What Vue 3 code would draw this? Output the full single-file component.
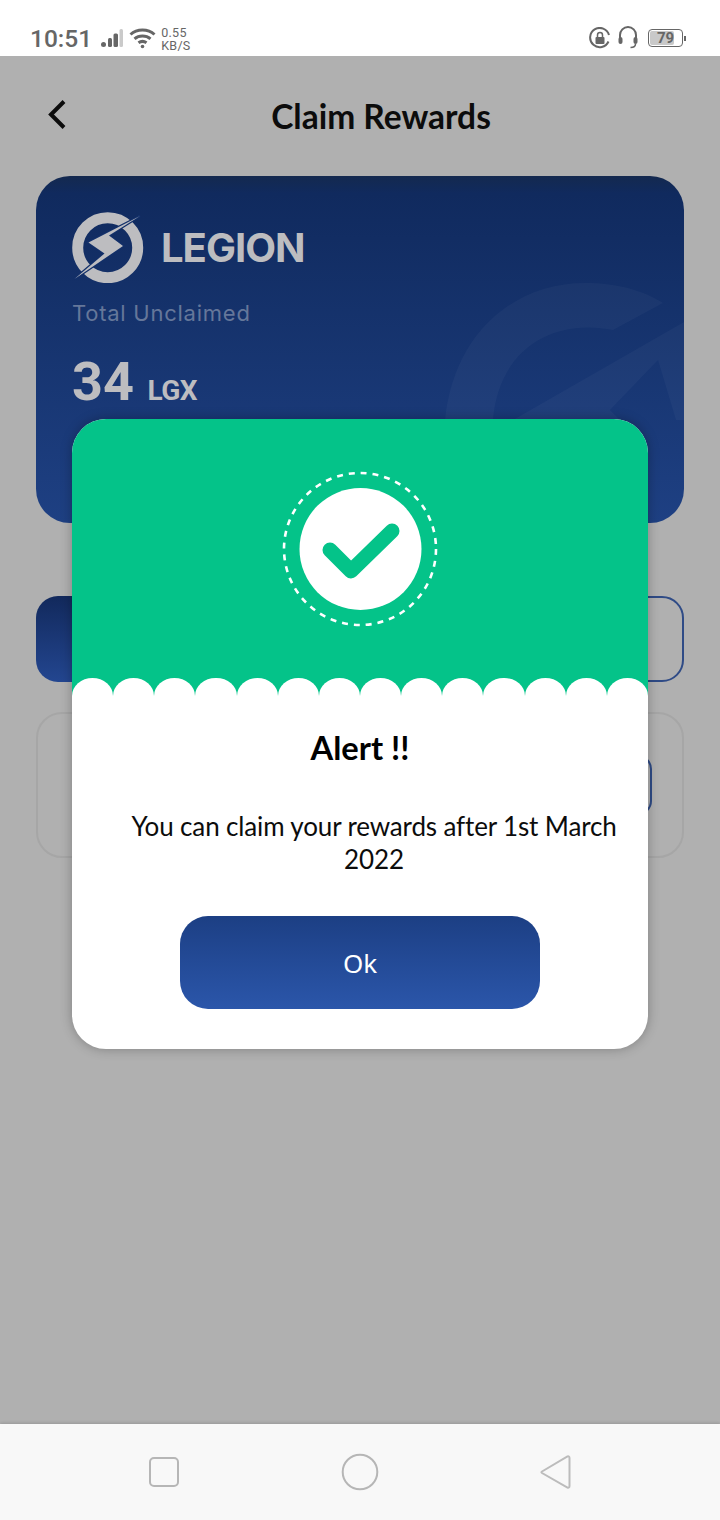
<template>
  <div class="screen">
    <div class="status">
      <div class="status-left">
        <span class="time">10:51</span>
        <svg class="signal" width="23" height="22" viewBox="0 0 23 22">
          <circle cx="2.500" cy="17.500" r="2.500" fill="#666" />
          <rect x="7" y="11" width="4" height="9" rx="1.500" fill="#666" />
          <rect x="12.500" y="6.500" width="4.500" height="13.500" rx="1.500" fill="#666" />
          <rect x="18.500" y="2" width="3.500" height="18" rx="1.500" fill="#cacaca" />
        </svg>
        <svg class="wifi" width="27" height="22" viewBox="0 0 27 22" fill="none" stroke="#666" stroke-width="3">
          <path d="M1.500 7.500C8 1.500 19 1.500 25.500 7.500" />
          <path d="M5.500 11.800C10 8 17 8 21.500 11.800" />
          <path d="M9.500 15.800C12 14 15 14 17.500 15.800" />
          <circle cx="13.500" cy="19.500" r="1.800" fill="#666" stroke="none" />
        </svg>
        <div class="speed"><span>0.55</span><span>KB/S</span></div>
      </div>
      <div class="status-right">
        <svg class="lock" width="22" height="22" viewBox="0 0 22 22" fill="none">
          <path d="M19.5 14.500A9.600 9.600 0 1 1 20 8" stroke="#666" stroke-width="2" />
          <rect x="6.500" y="10" width="9" height="7" rx="1" fill="#666" />
          <path d="M8.500 10V8a2.500 2.500 0 0 1 5 0v2" stroke="#666" stroke-width="1.500" />
        </svg>
        <svg width="20" height="24" viewBox="0 0 20 24" fill="none">
          <path d="M2 14V9a8 8 0 0 1 16 0v5" stroke="#666" stroke-width="2" />
          <rect x="0.500" y="11" width="4" height="7" rx="2" fill="#666" />
          <rect x="15.500" y="11" width="4" height="7" rx="2" fill="#666" />
          <path d="M17.500 18c0 2.500-2 3.500-5 3.500" stroke="#666" stroke-width="1.500" />
        </svg>
        <div class="battery">
          <div class="battery-body">
            <div class="battery-fill"></div>
            <span>79</span>
          </div>
          <i></i>
        </div>
      </div>
    </div>

    <main class="page">
      <header class="topbar">
        <svg class="back" width="24" height="32" viewBox="0 0 24 32" fill="none">
          <path d="M19 2.500 6 15.500 19 28.500" stroke="#0c0c0c" stroke-width="4" />
        </svg>
        <h1>Claim Rewards</h1>
      </header>

      <section class="card">
        <svg class="watermark" width="300" height="260" viewBox="0 0 300 260">
          <path d="M61 157C70 70 130 20 201 20c34 0 59 8 78 20l-50 27C170 55 115 85 109 157z" fill="#fff" fill-opacity=".03" />
          <path d="M129 157 300 59v98h-8L274 97l-48 50 10 10z" fill="#fff" fill-opacity=".03" />
        </svg>
        <div class="brand">
          <svg width="72" height="72" viewBox="0 0 72 72">
            <circle cx="35.700" cy="36.700" r="30" fill="none" stroke="#bdbdc0" stroke-width="11" />
            <path d="M68 5 16.500 31.500 32.500 42.500 2.500 68 51 35 37 24.500z" fill="#bdbdc0" stroke="#13306a" stroke-width="2.500" paint-order="stroke" />
          </svg>
          <span>LEGION</span>
        </div>
        <p class="label">Total Unclaimed</p>
        <p class="amount">34 <small>LGX</small></p>
      </section>

      <div class="actions">
        <div class="action action-filled"></div>
        <div class="action action-outline"></div>
      </div>

      <div class="panel">
        <div class="panel-btn"></div>
      </div>

      <div class="backdrop">
        <div class="modal">
          <div class="modal-top">
            <svg width="160" height="160" viewBox="0 0 160 160" fill="none">
              <circle cx="80" cy="80" r="76" stroke="#fff" stroke-width="2.600" stroke-dasharray="6 5.940" />
              <circle cx="80.500" cy="80" r="61" fill="#fff" />
              <path d="M50 81 71 102 112 62" stroke="#04c389" stroke-width="15" stroke-linecap="round" stroke-linejoin="round" />
            </svg>
            <div class="scallops">
              <span v-for="n in 14" :key="n"></span>
            </div>
          </div>
          <div class="modal-body">
            <h2>Alert !!</h2>
            <p>You can claim your rewards after 1st March 2022</p>
            <button class="ok" type="button">Ok</button>
          </div>
        </div>
      </div>
    </main>

    <nav class="navbar">
      <svg width="32" height="32" viewBox="0 0 32 32" fill="none">
        <rect x="2" y="2" width="28" height="28" rx="4" stroke="#b6b6b6" stroke-width="2" />
      </svg>
      <svg width="38" height="38" viewBox="0 0 38 38" fill="none">
        <circle cx="19" cy="19" r="17.300" stroke="#b6b6b6" stroke-width="2" />
      </svg>
      <svg width="32" height="38" viewBox="0 0 32 38" fill="none">
        <path d="M2 18.500 27.500 3.500c1-.5 2 0 2 1.500v28c0 1.500-1 2-2 1.500L2 20c-.8-.5-.8-1 0-1.500z" stroke="#bcbcbc" stroke-width="2" />
      </svg>
    </nav>
  </div>
</template>

<script setup>
</script>

<style>
html,
body {
  margin: 0;
  background: #f8f8f8;
}
</style>

<style scoped>
.screen {
  width: 720px;
  height: 1520px;
  display: flex;
  flex-direction: column;
  overflow: hidden;
  font-family: "Lato", "Liberation Sans", sans-serif;
}

.status {
  height: 56px;
  flex: none;
  background: #fff;
  display: flex;
  justify-content: space-between;
  align-items: center;
  padding: 0 34px 0 30px;
  box-sizing: border-box;
  color: #666;
  font-family: "Roboto", sans-serif;
}

.status-left,
.status-right {
  display: flex;
  align-items: center;
  padding-top: 20px;
}

.time {
  font-size: 24.5px;
  font-weight: 500;
  margin-right: 9px;
}

.signal {
  margin-right: 5px;
}

.wifi {
  margin-right: 5px;
}

.speed {
  display: flex;
  flex-direction: column;
  font-size: 12.5px;
  line-height: 13px;
  letter-spacing: 0.3px;
  padding-top: 2px;
}

.status-right {
  gap: 10px;
}

.lock {
  margin-right: -3px;
}

.battery {
  display: flex;
  align-items: center;
}

.battery-body {
  position: relative;
  width: 35px;
  height: 18px;
  border: 1px solid #666;
  border-radius: 4px;
  padding: 1px;
  box-sizing: border-box;
  display: flex;
}

.battery-fill {
  width: 78%;
  background: #c9c9c9;
  border-radius: 2px;
}

.battery-body span {
  position: absolute;
  inset: 0;
  text-align: center;
  font-size: 15px;
  line-height: 16px;
  font-weight: 700;
}

.battery i {
  width: 2px;
  height: 5px;
  margin-left: 1px;
  background: #666;
}

.page {
  position: relative;
  flex: 1;
  background: #b0b0b0;
  display: flex;
  flex-direction: column;
  padding: 0 36px;
}

.topbar {
  height: 120px;
  display: flex;
  align-items: center;
  margin: 0 -9px 0 9px;
}

.topbar h1 {
  flex: 1;
  margin: 0;
  text-align: center;
  font-size: 33.5px;
  font-weight: 700;
  color: #0c0c0c;
}

.back {
  margin-top: -2px;
}

.card {
  position: relative;
  height: 347px;
  flex: none;
  box-sizing: border-box;
  padding: 35px 36px;
  border-radius: 34px;
  overflow: hidden;
  background: linear-gradient(180deg, #14294f 0, #102a5e 5%, #1e4083 100%);
}

.watermark {
  position: absolute;
  right: 0;
  bottom: 0;
}

.brand {
  position: relative;
  display: flex;
  align-items: center;
  gap: 17px;
  color: #bdbdc0;
  font-family: "Inter", sans-serif;
  font-size: 40px;
  font-weight: 700;
  letter-spacing: -1px;
}

.label {
  position: relative;
  margin: 15px 0 0;
  font-family: "Inter", sans-serif;
  font-size: 22px;
  font-weight: 400;
  line-height: 30px;
  letter-spacing: 0.75px;
  color: #65779a;
}

.amount {
  position: relative;
  margin: 26px 0 0;
  font-family: "Roboto", sans-serif;
  font-size: 54px;
  font-weight: 700;
  line-height: 56px;
  color: #bdbdc0;
}

.amount small {
  font-size: 28px;
  letter-spacing: -0.5px;
}

.actions {
  display: grid;
  grid-template-columns: 1fr 1fr;
  gap: 20px;
  margin-top: 73px;
  flex: none;
}

.action {
  height: 86px;
  box-sizing: border-box;
  border-radius: 22px;
}

.action-filled {
  background: linear-gradient(180deg, #12295c, #234690);
}

.action-outline {
  border: 2px solid #2f4b86;
}

.panel {
  margin-top: 30px;
  height: 146px;
  flex: none;
  box-sizing: border-box;
  border: 2px solid #a6a6a6;
  border-radius: 26px;
  display: flex;
  justify-content: flex-end;
  align-items: center;
  padding: 0 30px;
}

.panel-btn {
  width: 200px;
  height: 60px;
  box-sizing: border-box;
  border: 2px solid #2f4b86;
  border-radius: 14px;
}

.backdrop {
  position: absolute;
  inset: 0;
  display: flex;
  justify-content: center;
  align-items: flex-start;
  padding-top: 363px;
}

.modal {
  width: 576px;
  height: 630px;
  border-radius: 34px;
  overflow: hidden;
  background: #fff;
  box-shadow: 0 0 12px rgba(0, 0, 0, 0.28);
}

.modal-top {
  position: relative;
  height: 277px;
  background: #04c389;
  display: flex;
  justify-content: center;
  padding-top: 50px;
  box-sizing: border-box;
}

.scallops {
  position: absolute;
  left: 0;
  right: 0;
  bottom: 0;
  display: flex;
}

.scallops span {
  flex: 1;
  height: 18px;
  background: #fff;
  border-radius: 50% 50% 0 0 / 100% 100% 0 0;
}

.modal-body {
  display: flex;
  flex-direction: column;
  align-items: center;
}

.modal-body h2 {
  margin: 32px 0 0;
  font-size: 32.7px;
  line-height: 40px;
  font-weight: 700;
  color: #000;
}

.modal-body p {
  margin: 42px 0 0;
  padding: 0 30px 0 58px;
  text-align: center;
  font-size: 26px;
  line-height: 33px;
  letter-spacing: -0.14px;
  color: #0c0c0c;
}

.ok {
  margin-top: 40px;
  width: 360px;
  height: 93px;
  border: 0;
  border-radius: 28px;
  background: linear-gradient(180deg, #1c3f84, #2b56aa);
  color: #fff;
  font-family: "Noto Sans", sans-serif;
  font-size: 26px;
}

.navbar {
  height: 96px;
  flex: none;
  background: #f8f8f8;
  display: flex;
  align-items: center;
  justify-content: space-between;
  padding: 0 148px;
  box-sizing: border-box;
  box-shadow: 0 -1px 3px rgba(0, 0, 0, 0.15);
  position: relative;
}
</style>
